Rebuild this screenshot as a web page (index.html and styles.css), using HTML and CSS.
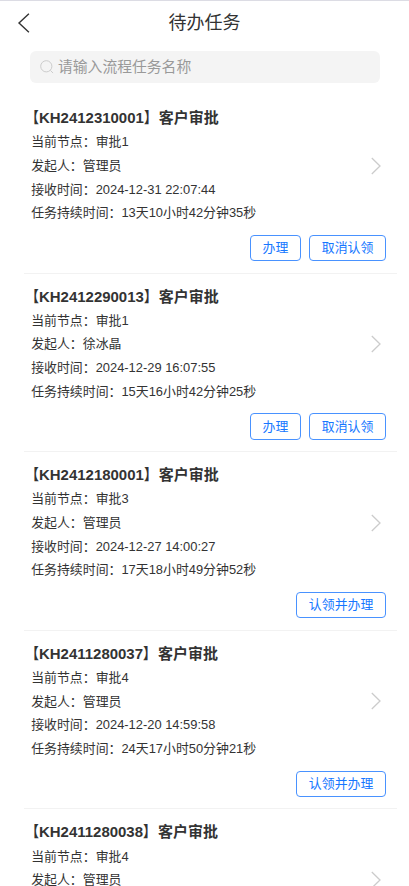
FILE: index.html
```
<!DOCTYPE html>
<html lang="zh-CN">
<head>
<meta charset="utf-8">
<title>待办任务</title>
<link rel="stylesheet" href="styles.css">
</head>
<body>
<header class="navbar">
  <svg class="back" viewBox="0 0 13 20"><path d="M11.9 .8 2 10l9.9 9.2"/></svg>
  <h1>待办任务</h1>
</header>
<div class="search">
  <svg class="search-icon" viewBox="0 0 14 14"><circle cx="6.3" cy="6.3" r="5.6"/><path d="m10.4 10.4 2.7 2.7"/></svg>
  <span>请输入流程任务名称</span>
</div>
<main class="list">
  <article class="task">
    <h2><span class="bracket">【</span>KH2412310001<span class="bracket end">】</span>客户审批</h2>
    <p>当前节点：审批1</p><p>发起人：管理员</p><p>接收时间：2024-12-31 22:07:44</p><p>任务持续时间：13天10小时42分钟35秒</p>
    <div class="actions"><button>办理</button><button>取消认领</button></div>
    <svg class="arrow" viewBox="0 0 10 18"><path d="m.8 1 8.2 8-8.2 8"/></svg>
  </article>
  <article class="task">
    <h2><span class="bracket">【</span>KH2412290013<span class="bracket end">】</span>客户审批</h2>
    <p>当前节点：审批1</p><p>发起人：徐冰晶</p><p>接收时间：2024-12-29 16:07:55</p><p>任务持续时间：15天16小时42分钟25秒</p>
    <div class="actions"><button>办理</button><button>取消认领</button></div>
    <svg class="arrow" viewBox="0 0 10 18"><path d="m.8 1 8.2 8-8.2 8"/></svg>
  </article>
  <article class="task">
    <h2><span class="bracket">【</span>KH2412180001<span class="bracket end">】</span>客户审批</h2>
    <p>当前节点：审批3</p><p>发起人：管理员</p><p>接收时间：2024-12-27 14:00:27</p><p>任务持续时间：17天18小时49分钟52秒</p>
    <div class="actions"><button>认领并办理</button></div>
    <svg class="arrow" viewBox="0 0 10 18"><path d="m.8 1 8.2 8-8.2 8"/></svg>
  </article>
  <article class="task">
    <h2><span class="bracket">【</span>KH2411280037<span class="bracket end">】</span>客户审批</h2>
    <p>当前节点：审批4</p><p>发起人：管理员</p><p>接收时间：2024-12-20 14:59:58</p><p>任务持续时间：24天17小时50分钟21秒</p>
    <div class="actions"><button>认领并办理</button></div>
    <svg class="arrow" viewBox="0 0 10 18"><path d="m.8 1 8.2 8-8.2 8"/></svg>
  </article>
  <article class="task">
    <h2><span class="bracket">【</span>KH2411280038<span class="bracket end">】</span>客户审批</h2>
    <p>当前节点：审批4</p><p>发起人：管理员</p>
    <svg class="arrow" viewBox="0 0 10 18"><path d="m.8 1 8.2 8-8.2 8"/></svg>
  </article>
</main>
</body>
</html>
```
FILE: styles.css
```
* { box-sizing: border-box; }
body {
  margin: 0;
  height: 886px;
  overflow: hidden;
  display: flex;
  flex-direction: column;
  background: #fff;
  color: #333;
  font-family: "Liberation Sans", "Noto Sans CJK SC", sans-serif;
}
h1, h2, p { margin: 0; font-weight: 400; white-space: nowrap; }
svg { fill: none; display: block; }
.navbar {
  flex: none;
  height: 45px;
  border-top: 1px solid #dcdce4;
  display: grid;
  grid-template-columns: 48px 1fr 48px;
  align-items: center;
}
.back { width: 13px; height: 20px; margin: -1px 0 0 17px; stroke: #333; stroke-width: 1.4; }
.navbar h1 { font-size: 18px; line-height: 44px; text-align: center; }
.search {
  flex: none;
  height: 32px;
  margin: 6px 29px 12px 30px;
  padding-left: 10px;
  display: flex;
  align-items: center;
  gap: 4px;
  border-radius: 6px;
  background: #f4f4f4;
  color: #999;
  font-size: 14.8px;
  line-height: 34px;
}
.search-icon { width: 14px; height: 14px; stroke: #ccc; stroke-width: 1; }
.list {
  flex: 1;
  min-height: 0;
  overflow: hidden;
  padding: 0 12px 0 24px;
}
.task {
  position: relative;
  height: 178.6px;
  padding-top: 11px;
  border-bottom: 1px solid #f2f2f2;
}
.task h2 {
  font-size: 14.97px;
  font-weight: 700;
  line-height: 24px;
}
.bracket {
  display: inline-block;
  transform: scaleX(.88);
  transform-origin: right;
}
.bracket.end { transform-origin: left; }
.task p {
  padding-left: 7.2px;
  font-size: 12.9px;
  line-height: 23.7px;
}
.task h2 + p { margin-top: .2px; }
.actions { display: flex; justify-content: flex-end; gap: 8px; padding: 9.8px 11px 0 0; }
button {
  height: 26.5px;
  padding: 0 11.7px;
  border: 1px solid #4992ff;
  border-radius: 4px;
  background: #fff;
  color: #1677ff;
  font: 12.9px/24px "Liberation Sans", "Noto Sans CJK SC", sans-serif;
}
.arrow {
  position: absolute;
  right: 16px;
  top: 61.5px;
  width: 10px;
  height: 18px;
  stroke: #ccc;
  stroke-width: 1.3;
}
```
